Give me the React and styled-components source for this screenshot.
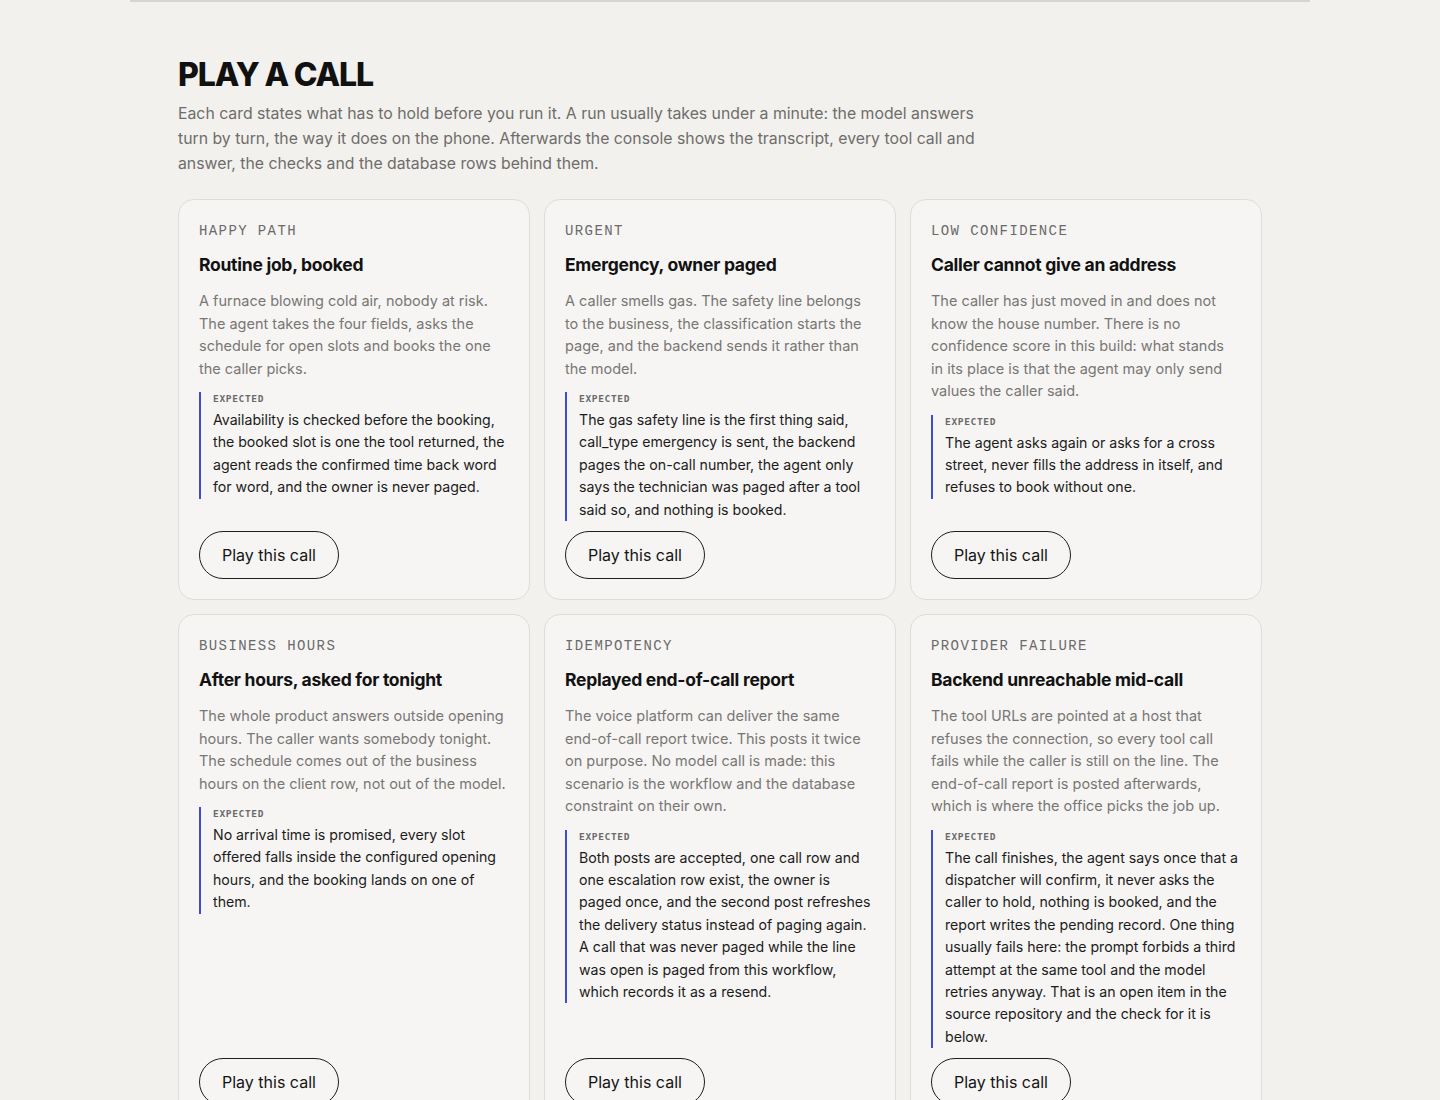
import React from 'react'
import styled, { createGlobalStyle } from 'styled-components'

const scenarios = [
  {
    tag: 'HAPPY PATH',
    title: 'Routine job, booked',
    text: 'A furnace blowing cold air, nobody at risk. The agent takes the four fields, asks the schedule for open slots and books the one the caller picks.',
    expected: 'Availability is checked before the booking, the booked slot is one the tool returned, the agent reads the confirmed time back word for word, and the owner is never paged.',
  },
  {
    tag: 'URGENT',
    title: 'Emergency, owner paged',
    text: 'A caller smells gas. The safety line belongs to the business, the classification starts the page, and the backend sends it rather than the model.',
    expected: 'The gas safety line is the first thing said, call_type emergency is sent, the backend pages the on-call number, the agent only says the technician was paged after a tool said so, and nothing is booked.',
  },
  {
    tag: 'LOW CONFIDENCE',
    title: 'Caller cannot give an address',
    text: 'The caller has just moved in and does not know the house number. There is no confidence score in this build: what stands in its place is that the agent may only send values the caller said.',
    expected: 'The agent asks again or asks for a cross street, never fills the address in itself, and refuses to book without one.',
  },
  {
    tag: 'BUSINESS HOURS',
    title: 'After hours, asked for tonight',
    text: 'The whole product answers outside opening hours. The caller wants somebody tonight. The schedule comes out of the business hours on the client row, not out of the model.',
    expected: 'No arrival time is promised, every slot offered falls inside the configured opening hours, and the booking lands on one of them.',
  },
  {
    tag: 'IDEMPOTENCY',
    title: 'Replayed end-of-call report',
    text: 'The voice platform can deliver the same end-of-call report twice. This posts it twice on purpose. No model call is made: this scenario is the workflow and the database constraint on their own.',
    expected: 'Both posts are accepted, one call row and one escalation row exist, the owner is paged once, and the second post refreshes the delivery status instead of paging again. A call that was never paged while the line was open is paged from this workflow, which records it as a resend.',
  },
  {
    tag: 'PROVIDER FAILURE',
    title: 'Backend unreachable mid-call',
    text: 'The tool URLs are pointed at a host that refuses the connection, so every tool call fails while the caller is still on the line. The end-of-call report is posted afterwards, which is where the office picks the job up.',
    expected: 'The call finishes, the agent says once that a dispatcher will confirm, it never asks the caller to hold, nothing is booked, and the report writes the pending record. One thing usually fails here: the prompt forbids a third attempt at the same tool and the model retries anyway. That is an open item in the source repository and the check for it is below.',
  },
]

const GlobalStyle = createGlobalStyle`
  *, *::before, *::after {
    box-sizing: border-box;
  }
  body {
    margin: 0;
    background: #f2f1ee;
    font-family: Inter, "Noto Sans", sans-serif;
    color: #141414;
  }
`

const App = () => {
  return (
    <>
      <GlobalStyle />
      <Section>
        <Heading>PLAY A CALL</Heading>
        <Intro>
          Each card states what has to hold before you run it. A run usually takes under a minute: the model answers
          turn by turn, the way it does on the phone. Afterwards the console shows the transcript, every tool call and
          answer, the checks and the database rows behind them.
        </Intro>
        <Cards>
          {scenarios.map((s) => (
            <Card key={s.tag}>
              <Tag>{s.tag}</Tag>
              <Title>{s.title}</Title>
              <Text>{s.text}</Text>
              <Expected>
                <ExpectedLabel>EXPECTED</ExpectedLabel>
                <ExpectedText>{s.expected}</ExpectedText>
              </Expected>
              <PlayButton>Play this call</PlayButton>
            </Card>
          ))}
        </Cards>
      </Section>
    </>
  )
}

const Section = styled.section`
  max-width: 1180px;
  margin: 0 auto;
  border-top: 2px solid #d6d5d1;
  padding: 54px 48px 48px;
`

const Heading = styled.h2`
  margin: 0;
  font-size: 32px;
  line-height: 37px;
  font-weight: 800;
  letter-spacing: -0.035em;
  color: #111;
`

const Intro = styled.p`
  margin: 8px 0 0;
  max-width: 810px;
  font-size: 15.8px;
  line-height: 25px;
  color: #6e6d6a;
`

const Cards = styled.div`
  display: grid;
  grid-template-columns: repeat(3, 1fr);
  gap: 14px;
  margin-top: 23px;
`

const Card = styled.div`
  display: flex;
  flex-direction: column;
  gap: 12px;
  padding: 21px 20px 20px;
  background: #f6f5f3;
  border: 1px solid #dfddd8;
  border-radius: 16px;
`

const Tag = styled.div`
  font-family: "Liberation Mono", "DejaVu Sans Mono", monospace;
  font-size: 14px;
  line-height: 20px;
  letter-spacing: 0.1em;
  color: #6a6a6a;
`

const Title = styled.h3`
  margin: 0;
  font-size: 17.5px;
  line-height: 24px;
  font-weight: 700;
  letter-spacing: -0.015em;
  color: #121212;
`

const Text = styled.p`
  margin: 1px 0 0;
  padding-right: 3px;
  font-size: 14.5px;
  line-height: 22.5px;
  color: #787774;
`

const Expected = styled.div`
  margin-bottom: -2px;
  border-left: 2px solid #3d4cd3;
  padding-left: 12px;
`

const ExpectedLabel = styled.div`
  font-family: "DejaVu Sans Mono", monospace;
  font-size: 9.5px;
  line-height: 14px;
  font-weight: 700;
  letter-spacing: 0.07em;
  color: #6a6a6a;
`

const ExpectedText = styled.p`
  margin: 3px 0 0;
  font-size: 14.15px;
  line-height: 22.4px;
  color: #1c1c1c;
`

const PlayButton = styled.button`
  align-self: flex-start;
  margin-top: auto;
  height: 48px;
  padding: 0 22px;
  border: 1.5px solid #1e1e1e;
  border-radius: 24px;
  background: transparent;
  font-family: inherit;
  font-size: 16px;
  color: #141414;
  cursor: pointer;
`

export default App
